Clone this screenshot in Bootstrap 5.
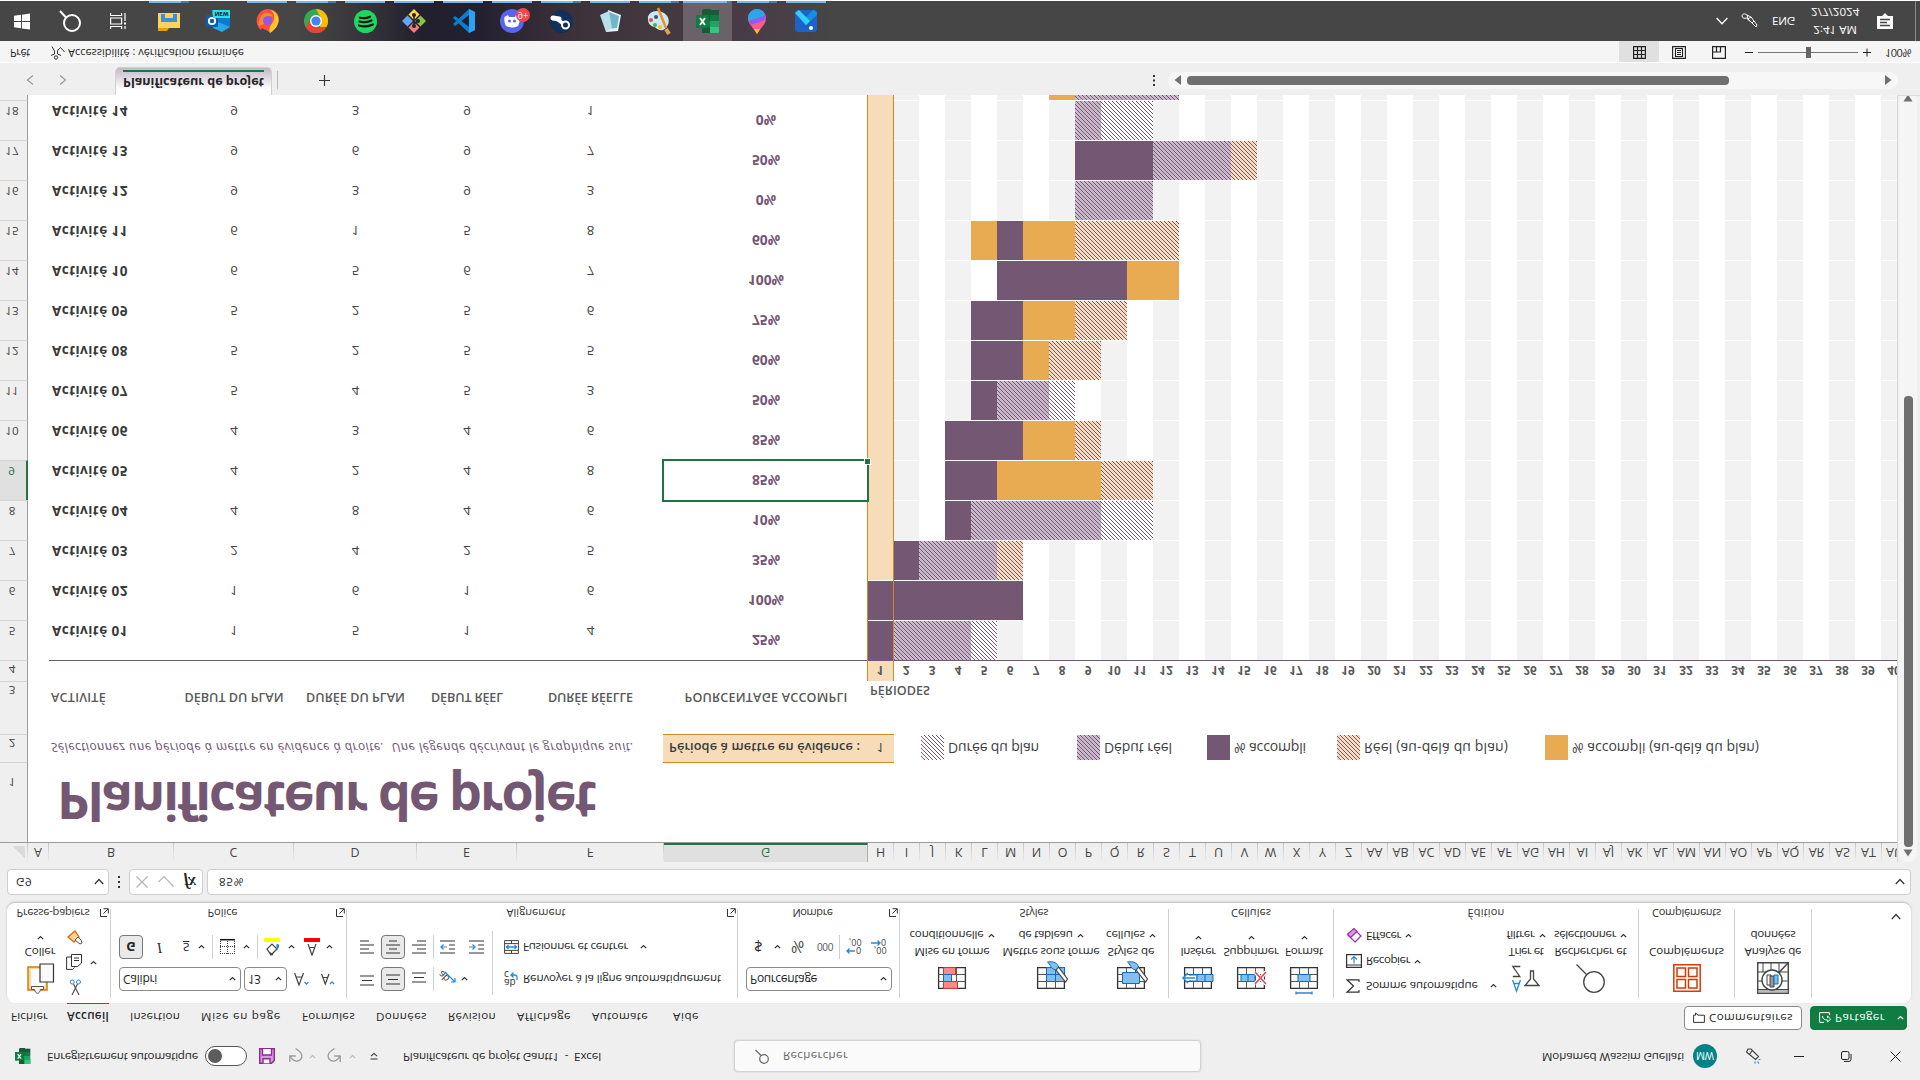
<!DOCTYPE html>
<html lang="fr">
<head>
<meta charset="utf-8">
<title>Planificateur de projet Gantt1 - Excel</title>
<link href="https://cdn.jsdelivr.net/npm/bootstrap@5.3.0/dist/css/bootstrap.min.css" rel="stylesheet">
<style>
:root{--plum:#735773;--lilac:#c9b9ca;--gold:#e8ab51;--cream:#f7dcb9;--xl:#107c41;
--hatch:url("data:image/svg+xml,%3Csvg xmlns='http://www.w3.org/2000/svg' width='4' height='4' shape-rendering='crispEdges'%3E%3Cpath fill='%23735773' d='M0 3h1v1H0zM1 2h1v1H1zM2 1h1v1H2zM3 0h1v1H3z'/%3E%3C/svg%3E")}
html,body{height:100%;overflow:hidden}
body{font:11.6px/16px "Open Sans","Noto Sans",sans-serif;color:#262626;background:#efefef}
.screen{width:1920px;height:1080px;overflow:hidden;transform:scaleY(-1);background:#efefef}
.screen svg{display:block;fill:none;flex:none;overflow:visible}
.rail{display:grid;align-items:center;white-space:nowrap;justify-items:start}
.cv{width:7px;height:5px;stroke:#333;stroke-width:1.2}
.cv.dim{stroke:#bbb}
.cv.inv{stroke:#fff}

/* title bar */
.titlebar{height:47px;padding-left:15px;grid-template-columns:32px 158px 54px 30px 20px 18px 22px 21px 33px 331px 808px 151px 52px 49px 47px 49px 20px}
.titlebar>span{margin-top:-1px}
.toggle{width:42px;height:20px;border:1.5px solid #555;border-radius:10px;background:#fff;padding:2px}
.toggle i{display:block;width:14px;height:14px;border-radius:50%;background:#5c5c5c}
.finder{width:467px;height:32px;border:1px solid #d2d2d2;border-radius:4px;background:#fafafa;box-shadow:0 0 2px #ccc;padding-left:20px;color:#666}
.avatar{width:24px;height:24px;border-radius:50%;background:#038387;color:#fff;font-size:10px}

/* tabs */
.tabs{height:30px;padding:0 13px 0 11px}
.tabnames{gap:21px;padding-top:2px}
.tabs .here{box-shadow:0 2px 0 var(--xl);height:24px;line-height:20px;padding-top:2px;margin:1px 0 0 -2px}
.tbtn{height:24px;border-radius:4px;border:1px solid #8a8a8a;background:#fff;white-space:nowrap;width:118px}
.tbtn.go{background:var(--xl);border-color:var(--xl);color:#fff;width:97px}

/* ribbon */
.ribbon{width:1904px;height:100px;margin-left:7px;background:#fff;border-radius:8px;box-shadow:0 1px 2px #bbb}
.vline{width:1px;background:#d0d0d0;margin:5px 0 6px}
.grp{height:100px}
.tools{height:80px}
.cap{height:20px;display:grid;grid-template-columns:1fr 12px;align-items:center;justify-items:center;font-size:11px;color:#333}
.cap.solo{grid-template-columns:1fr}
.g1{width:103px}.g2{width:235px}.g3{width:390px}.g4{width:161px}.g5{width:268px}.g6{width:164px}.g7{width:304px}.g8{width:95px}.g9{width:76px}
.g1 .cap{padding-left:1px}
.two{display:grid;grid-template-rows:24px 24px;row-gap:8px;padding-top:12px}
.pick{height:24px;border:1px solid #8a8a8a;border-radius:4px;padding:0 4px 0 3px;font-size:12px}
.w122{width:122px}.w43{width:43px}.w146{width:146px}
.on{width:24px;height:24px;border:1px solid #777;border-radius:4px;background:#e9e9e9}
.bold-g{font-weight:700;font-size:13px;line-height:22px;text-align:center}
.ital{font:italic 14px "Liberation Serif",serif}
.half{width:1px;height:24px;background:#d0d0d0}
.half.tall{box-shadow:0 4px 0 #d0d0d0,0 -4px 0 #d0d0d0}
.big{display:flex;flex-direction:column;align-items:center;white-space:nowrap;padding-top:7px;line-height:17px}
.big .art{height:35px;display:flex;align-items:center}
.big.w88{width:88px}.big.w110{width:110px}.big.w50{width:50px}.big.w53{width:53px}.big.w56{width:56px}.big.w73{width:73px}
.fa{padding-left:8px;grid-template-columns:125px 50px 27px 20px}
.fb{padding-left:8px;grid-template-columns:38px 26px 15px 14px 8px 23px 14px 7px 24px 16px 22px 10px}
.al{height:24px;padding-left:13px;grid-template-columns:21px 31px 21px 7px 21px 31px 12px 19px 117px 10px}
.na{padding-left:8px}
.nb{padding-left:16px;grid-template-columns:20px 17px 26px 22px 7px 25px 20px}
.nb .cur{font-size:15px}.nb .pct{font-size:16px;color:#444}.nb .mil{font-size:10px;color:#555}
.g1 .paste{width:64px;padding-left:2px}
.copy{gap:8px;margin-left:-4px}
.three{display:grid;grid-template-rows:25px 25px 25px;align-items:center;padding-top:5px;white-space:nowrap}
.g1 .three{margin-left:-1px;padding-top:3px}
.g7 .three{width:164px;padding-left:12px;grid-template-rows:24px 25px 26px}

/* formula bar */
.fbar{height:41px;padding:0 9px 7px 7px}
.fbox{height:26px;border:1px solid #cfcfcf;border-radius:4px;background:#fff}
.namebox{width:102px}
.fxbox{width:74px;padding-left:6px;gap:10px}
.fx{font:italic 700 16px/20px "Liberation Serif",serif;letter-spacing:-1px}
.entry{margin-left:4px;padding:0 5px 0 11px}

/* sheet */
.sheetwrap{height:766px}
.area{width:1898px;overflow:hidden;border-right:1px solid #d8d8d8;position:relative;background:#fff;height:767px}
.heads{height:20px;background:#efefef;border-bottom:1px solid #9b9b9b;color:#444;font-size:12.5px}
.heads div{flex:none;height:19px;text-align:center;line-height:20px;border-right:1px solid;border-image:linear-gradient(#efefef,#c4c4c4) 1}
.heads .sel{background:#e0e0e0;color:#217346;border-bottom:2px solid #217346;border-image:none;border-color:#217346;border-right-color:#b0b0b0}
.heads .corner{width:28px;background:linear-gradient(135deg,#efefef 50%,#dadada 50%) 13px 4px/12px 12px no-repeat}
.srow{display:flex;white-space:nowrap}
.rh{flex:none;width:28px;background:#efefef;border-right:1px solid #9b9b9b;border-bottom:1px solid #d4d4d4;display:flex;align-items:flex-end;justify-content:center;padding:0 3px 1px 0;font-size:11.6px;line-height:15px;color:#444}
.body-row .rh{padding-bottom:3px}
.rh.sel{background:#e0e0e0;color:#217346;border-right:2px solid #217346}
.ca{width:21px}.cb{width:125px}.cc{width:120px}.cd{width:123px}.ce{width:100px}.cf{width:147px}.cg{width:204px}.ch{width:26px}
.srow>.c{flex:none;text-align:center}
.body-row{height:40px}
.body-row .c{padding-top:18.500px;line-height:20px;font-size:13.2px;color:#444}
.body-row .cb{text-align:left;padding-left:3px;font-weight:700;font-size:13.5px;color:#3a3a3a}
.body-row .cg{width:204px;margin-right:-1px;padding-top:9.500px;font-weight:700;font-size:13.8px;color:var(--plum)}
.lane{display:flex;flex:none}
.lane i{flex:none;width:26px;height:39px}
.lane i:nth-child(even){background-color:#f2f2f2;background-position:2px 0}
.lane .hl{height:40px;background:var(--cream)}
.lane .P{background-color:var(--plum)!important}
.lane .O{background-color:var(--gold)!important}
.lane .V,.lane .W,.lane .T{background-image:var(--hatch)}
.lane .V{background-color:var(--lilac)!important}.lane .W{background-color:#fff!important}.lane .T{background-color:var(--cream)!important}
.r1{height:80px}.r1 .rh{padding-bottom:12px}
.bigname{font:700 52px/52px "Open Sans",sans-serif;color:var(--plum);padding:14px 0 0 29px;display:flex}
.r2{height:28px}.r3{height:53px}.r4{height:21px}
.hint{width:635px;padding:6px 0 0 23px;font-style:italic;font-size:12.8px;color:var(--plum)}
.pbox{width:231px;margin:-1px 0 0;height:29px;border:solid #ce8b24;border-width:1px 0;background:var(--cream);padding:0 10px 0 6px;font-weight:600;font-size:12.8px;color:#3a3a3a}
.key{font-size:14px;color:#3f3f3f;gap:4px;display:flex;align-items:center;height:27px}
.key i{width:23px;height:25px}
.key .kP{background:var(--plum)}.key .kO{background:var(--gold)}
.key .kV{background:var(--hatch) var(--lilac)}.key .kW{background:var(--hatch) #fff}.key .kT{background:var(--hatch) var(--cream)}
.keys{padding-left:27px;grid-template-columns:156px 130px 130px 208px 220px}
.r3 .c{padding-top:29px;line-height:16px;font-size:12.6px;font-weight:600;color:#595959}
.r3 .cb{padding-left:2px}
.r3 .cper{padding:36px 0 0 2px}
.r4 .rh{height:21px}
.r4 .gap{width:818px;border-bottom:1px solid var(--plum)}
.r4 .nums{border-bottom:1px solid var(--plum)}
.r4 .n{flex:none;width:26px;text-align:center;font-weight:700;font-size:11.8px;line-height:21px;height:20px;color:#595959}
.r4 .n:first-child{background:var(--cream)}
.colmark{position:absolute;left:867px;top:181px;width:27px;height:600px;border:solid #ce8b24;border-width:0 1px;pointer-events:none}
.cursor{position:absolute;left:662px;top:360px;width:207px;height:43px;border:2px solid #217346}
.cursor i{position:absolute;right:-4px;bottom:-3px;width:7px;height:7px;background:#217346;border:1px solid #fff}
.vbar{width:18px;margin-left:1px;background:#f5f5f5;border-radius:9px;padding:5px 0 3px;height:771px}
.vbar i{width:9px;height:451px;border-radius:4px;background:#707070;margin:2px 0 auto}

/* sheet tabs */
.sheettabs{height:33px;border-top:1px solid #dadada;padding:0 0 3px 26px;background:#efefef;grid-template-columns:33px 57px 161px 47px 829px 15px 734px}
.stab{width:157px;height:28px;align-self:start;background:linear-gradient(#fff 20%,#c5b8c8);border:1px solid #d0d0d0;border-top:0;border-radius:0 0 5px 5px;padding:5px 7px 0;font-weight:700;font-size:12.6px;line-height:16px;margin-left:-1px}
.stab div{border-bottom:2px solid var(--xl);height:20px}
.hbar{width:730px;height:17px;border-radius:9px;background:#f7f7f7;padding:0 6px}
.hbar i{width:542px;height:9px;border-radius:4px;background:#707070;margin:0 auto 0 6px}
.status{height:22px;border-top:1px solid #fff;background:#f5f5f5;padding:0 0 3px 10px;font-size:11px;grid-template-columns:40px 18px 1551px 40px 13px 40px 33px 13px 105px 22px 30px}
.status span{margin-top:-1px}
.status .vw{width:40px;height:21px;background:#e0e0e0;margin-bottom:-3px;padding-bottom:3px}

/* taskbar */
.taskbar{height:40px;background:linear-gradient(90deg,#464646 0 300px,#37353b 360px,#22202d 420px,#232030 480px,#3c3139 570px,#43393f 660px,#483b47 740px,#464646 830px)}
.tk{width:48px;height:40px;display:flex;align-items:center;justify-content:center;flex:none;padding-bottom:1px}
.app{width:49px;position:relative;padding-left:1px}
.run{background:linear-gradient(#76b9ed,#76b9ed) 5px 38px/40px 2px no-repeat}
.many{background:linear-gradient(90deg,#76b9ed 32px,#4b7ea5 32px) 5px 38px/40px 2px no-repeat}
.lit{background:linear-gradient(90deg,#76b9ed 44px,#4b7ea5 44px) 0 38px/48px 2px no-repeat,#6a6269}
.tray{color:#fff;margin-left:auto;width:204px;height:40px;grid-template-columns:26px 30px 39px 66px 38px 4px}
.clock{width:46px;text-align:right;line-height:17.5px;font-size:11.6px;margin-top:-1px}
.peek{width:1px;height:40px;background:#8a8a8a}
.tag{position:absolute;right:6px;top:19px;width:14px;height:14px;border-radius:50%;background:#f0474f;font-size:9px;line-height:14px;color:#fff;text-align:center}
.new{position:absolute;left:20px;top:23px;width:17px;height:8px;background:#2ce0ea;color:#013;font:700 6px/8px "Open Sans",sans-serif;text-align:center}
.lastline{height:1px}
</style>
<script src="https://cdn.jsdelivr.net/npm/bootstrap@5.3.0/dist/js/bootstrap.bundle.min.js"></script>
</head>
<body>
<svg width="0" height="0" class="position-absolute">
  <symbol id="cv" viewBox="0 0 7 5" overflow="visible"><path d="M.8 .8 3.5 3.5 6.2 .8"/></symbol>
  <symbol id="launch" viewBox="0 0 9 9" overflow="visible"><path d="M.5 8V.5H7M3.500 3.500 8 8M8.300 3.500v4.800H3.500" stroke="#333"/></symbol>
  <symbol id="xl" viewBox="0 0 24 24"><path fill="#21a366" d="M6 0h17v8H6z"/><path fill="#185c37" d="M6 0h9v24H7z"/><path fill="#107c41" d="M6 6h9v6H6z"/><path fill="#33c481" d="M14 0h9v6h-9z"/><path fill="#21a366" d="M14 6h9v6h-9z"/><path fill="#107c41" d="M14 12h9v6h-9z"/><path fill="#185c37" d="M6 18h17v5H6z"/><path fill="#107c41" d="M0 5h13v13H0z"/><path stroke="#fff" stroke-width="1.900" d="M4 8l5 7M9 8l-5 7"/></symbol>
  <symbol id="grid" viewBox="0 0 28 22" overflow="visible"><path fill="#fafafa" stroke="#333" stroke-width="1.300" d="M.6.6h26.800v20.800H.6z"/><path stroke="#555" d="M.6 7.500h26.800M.6 14.500h26.800M9.500.6v20.800M18.500.6v20.800"/></symbol>
  <symbol id="brush" viewBox="0 0 22 22" overflow="visible"><path fill="#fff" stroke="#444" stroke-width="1.200" d="M20.500 6 11 18l2.500 3 9-12z"/><path fill="#83beec" stroke="#0f6cbd" d="M10.500 18l3 3c-1 4-5 6-11 5 3-2 3-7 8-8z"/></symbol>
</svg>

<div class="screen d-flex flex-column">

  <header class="rail titlebar">
    <svg width="16" height="16"><use href="#xl"/></svg>
    <span data-w="151">Enregistrement automatique</span>
    <div class="toggle"><i></i></div>
    <svg width="16" height="16" viewBox="0 0 16 16" stroke="#8c2a96" stroke-width="1.400"><path fill="#d59add" d="M.7.7h11.800l2.800 2.800v11.800H.7z"/><path fill="#fff" d="M4 .7v4.600h7V.7M3.500 15V9h9v6"/></svg>
    <svg width="14" height="16" viewBox="0 0 14 16" stroke="#9a9a9a" stroke-width="1.300"><path d="M.8 2v6h6M1 8c3-6 8-6 10.500-3.500S13 11 10 13l-3.500 2.500"/></svg>
    <svg class="cv dim"><use href="#cv"/></svg>
    <svg width="14" height="16" viewBox="0 0 14 16" stroke="#9a9a9a" stroke-width="1.300"><path d="M13.200 2v6h-6M13 8C10 2 5 2 2.500 4.500S1 11 4 13l3.500 2.500"/></svg>
    <svg class="cv dim"><use href="#cv"/></svg>
    <svg width="8" height="8" viewBox="0 0 8 8" stroke="#333" stroke-width="1.100"><path d="M.5 1h7M1 3.800 4 6.600 7 3.800"/></svg>
    <span data-w="198">Planificateur de projet Gantt1&nbsp; -&nbsp; Excel</span>
    <div class="finder d-flex align-items-center">
      <svg class="me-3" width="14" height="15" viewBox="0 0 14 15" stroke="#666" stroke-width="1.200"><circle cx="9" cy="5" r="4.300"/><path d="M6 8.500.5 14"/></svg>
      <span style="margin-left:-2px" data-w="65">Rechercher</span>
    </div>
    <span data-w="142">Mohamed Wassim Guellati</span>
    <div class="avatar d-flex align-items-center justify-content-center">MW</div>
    <svg width="16" height="17" viewBox="0 0 16 17" stroke="#444" stroke-width="1.200"><path d="M1.500 13 10.500 5.500 13.500 8.500 6 16H3zM4.500 10.500 7 14"/><path stroke="#2b88d8" d="M10 1.500v2M14 1.500l-1.500 2M15.500 5.500h-2"/></svg>
    <svg width="11" height="11" viewBox="0 0 11 11" stroke="#222"><path d="M0 5.500h10"/></svg>
    <svg width="11" height="11" viewBox="0 0 11 11" stroke="#222"><rect x=".5" y="2.500" width="7.500" height="8" rx="1.500"/><path d="M3 .6h5q2 0 2 2V8"/></svg>
    <svg width="11" height="11" viewBox="0 0 11 11" stroke="#222"><path d="M.5.500l10 10M10.500.500l-10 10"/></svg>
  </header>

  <nav class="tabs d-flex align-items-center justify-content-between">
    <div class="tabnames d-flex align-items-center">
      <span data-w="37">Fichier</span><span class="here fw-semibold" data-w="42">Accueil</span><span data-w="50">Insertion</span><span data-w="80">Mise en page</span><span data-w="53">Formules</span><span data-w="51">Données</span><span data-w="48">Révision</span><span data-w="54">Affichage</span><span data-w="56">Automate</span><span class="ps-1" data-w="26">Aide</span>
    </div>
    <div class="d-flex gap-2">
      <div class="tbtn d-flex align-items-center gap-1 ps-2">
        <svg width="12" height="11" viewBox="0 0 12 11" stroke="#333"><path d="M.6.6h10.800v7.200H5L2.500 10V7.800H.6z"/></svg><span data-w="84">Commentaires</span>
      </div>
      <div class="tbtn go d-flex align-items-center gap-1 ps-2">
        <svg width="12" height="11" viewBox="0 0 12 11" stroke="#fff"><path d="M5 .600H.6v9.800h9.800V8M3.500 7c0-3 2-4 5-4V.800L11.600 4 8.500 7V5"/></svg><span data-w="50">Partager</span><svg class="cv inv ms-2"><use href="#cv"/></svg>
      </div>
    </div>
  </nav>

  <section class="ribbon d-flex">
    <div class="grp g1">
      <div class="tools d-flex">
        <div class="big paste">
          <div class="art"><svg width="27" height="31" viewBox="0 0 27 31"><path fill="#fbd88e" stroke="#dc7a0e" stroke-width="1.500" d="M1 4h19v23H1z"/><path fill="#fff" d="M4 8h14v17H4z"/><path fill="#f3f3f3" stroke="#555" d="M4.500 4.500h3c1-5 5-5 6 0h3v3h-12z"/><path fill="#fafafa" stroke="#333" stroke-width="1.200" d="M13 12h13.500v18H13z"/></svg></div>
          <span data-w="31">Coller</span><svg class="cv mt-1"><use href="#cv"/></svg>
        </div>
        <div class="three">
          <svg width="11" height="16" viewBox="0 0 11 16" stroke="#555"><path d="M2 0l5.500 11M9 0 3.500 11" stroke-width="1.200"/><circle cx="2.200" cy="13" r="2" stroke="#2b88d8"/><circle cx="8.500" cy="13" r="2" stroke="#2b88d8"/></svg>
          <div class="copy d-flex align-items-center"><svg width="16" height="16" viewBox="0 0 16 16" stroke="#333"><path d="M5 13H.600V.600h6l2 2"/><path d="M5.500 3.500h6L15.500 7v8.500h-10zM8 9.500h5M8 12h5"/></svg><svg class="cv"><use href="#cv"/></svg></div>
          <svg style="margin-left:-3px" width="17" height="15" viewBox="0 0 17 15"><path fill="#fbd88e" stroke="#dc6a0e" stroke-width="1.300" d="M1 8 7 3l5 5-4 6z"/><path fill="#fff" stroke="#555" d="M8 5l5-4 2 1-1 3-3 3z"/></svg>
        </div>
      </div>
      <div class="cap"><span data-w="73">Presse-papiers</span><svg width="9" height="9"><use href="#launch"/></svg></div>
    </div>
    <div class="vline"></div>

    <div class="grp g2">
      <div class="tools two">
        <div class="rail fa">
          <div class="pick w122 d-flex align-items-center justify-content-between"><span data-w="34">Calibri</span><svg class="cv"><use href="#cv"/></svg></div>
          <div class="pick w43 d-flex align-items-center justify-content-between"><span data-w="12">13</span><svg class="cv"><use href="#cv"/></svg></div>
          <svg width="15" height="14" viewBox="0 0 15 14" stroke="#444" stroke-width="1.200"><path d="M.6 13 5 1l4.500 12M2.200 9h5.800"/><path stroke="#2b88d8" d="M10.500 4l2-2.200 2 2.200"/></svg>
          <svg width="14" height="12" viewBox="0 0 14 12" stroke="#444" stroke-width="1.200"><path d="M.6 11 4.300 1 8 11M2 7.500h4.500"/><path stroke="#2b88d8" d="M9 1l2 2.200L13 1"/></svg>
        </div>
        <div class="rail fb">
          <div class="on bold-g">G</div>
          <span class="ital">I</span>
          <span class="text-decoration-underline">S</span>
          <svg class="cv"><use href="#cv"/></svg><span class="half"></span>
          <svg width="15" height="15" viewBox="0 0 15 15" stroke="#444"><path stroke-dasharray="1 1" d="M0 .500h15M0 7.500h15M.500 0v14M7.500 0v14M14.500 0v14"/><path stroke="#111" stroke-width="1.500" d="M0 14.300h15"/></svg>
          <svg class="cv"><use href="#cv"/></svg><span class="half"></span>
          <svg width="16" height="18" viewBox="0 0 16 18"><path stroke="#444" stroke-width="1.200" d="M7 1l6 6-5 5-5-5zM5 4l4-3"/><path fill="#2b88d8" d="M13 6c2 2 3 5 1 6s-2-3-1-6z"/><path fill="#ff0" d="M0 14h16v4H0z"/></svg>
          <svg class="cv"><use href="#cv"/></svg>
          <svg width="16" height="18" viewBox="0 0 16 18"><path stroke="#444" stroke-width="1.200" d="M4 12 8 1l4 11M5.500 8.500h5"/><path fill="red" d="M0 14h16v4H0z"/></svg>
          <svg class="cv"><use href="#cv"/></svg>
        </div>
      </div>
      <div class="cap"><span data-w="30">Police</span><svg width="9" height="9"><use href="#launch"/></svg></div>
    </div>
    <div class="vline"></div>

    <div class="grp g3">
      <div class="tools two">
        <div class="rail al">
          <svg width="14" height="14" viewBox="0 0 14 14" stroke="#333" stroke-width="1.200"><path d="M0 1h14M2 5.500h10M0 10h14"/></svg>
          <div class="on d-flex align-items-center justify-content-center"><svg width="14" height="12" viewBox="0 0 14 12" stroke="#333" stroke-width="1.200"><path d="M0 1h14M2 5.500h10M0 10h14"/></svg></div>
          <svg width="14" height="14" viewBox="0 0 14 14" stroke="#333" stroke-width="1.200"><path d="M0 4h14M2 8.500h10M0 13h14"/></svg>
          <span class="half"></span>
          <svg width="17" height="15" viewBox="0 0 17 15"><text x="-2" y="12" font-size="10" fill="#333" transform="rotate(-45 5 9)">ab</text><path stroke="#2b88d8" stroke-width="1.200" d="M5 14 15 4M11 4h4v4"/></svg>
          <svg class="cv"><use href="#cv"/></svg>
          <span class="half tall"></span>
          <svg width="15" height="16" viewBox="0 0 15 16"><text x="0" y="8" font-size="10" fill="#333">ab</text><text x="0" y="16" font-size="10" fill="#333">c</text><path stroke="#2b88d8" stroke-width="1.300" d="M13 7v3q0 2-3 2H7M9.500 9.500 7 12l2.500 2.500"/></svg>
          <span data-w="198">Renvoyer à la ligne automatiquement</span>
        </div>
        <div class="rail al">
          <svg width="14" height="14" viewBox="0 0 14 14" stroke="#333" stroke-width="1.200"><path d="M0 1h14M0 5h9M0 9h14M0 13h9"/></svg>
          <div class="on d-flex align-items-center justify-content-center"><svg width="14" height="14" viewBox="0 0 14 14" stroke="#333" stroke-width="1.200"><path d="M0 1h14M3 5h8M0 9h14M3 13h8"/></svg></div>
          <svg width="14" height="14" viewBox="0 0 14 14" stroke="#333" stroke-width="1.200"><path d="M0 1h14M5 5h9M0 9h14M5 13h9"/></svg>
          <span class="half"></span>
          <svg width="15" height="14" viewBox="0 0 15 14" stroke="#333" stroke-width="1.200"><path d="M0 1h15M9 5h6M9 9h6M0 13h15"/><path stroke="#2b88d8" d="M7 7H1M3.500 4.500 1 7l2.500 2.500"/></svg>
          <svg class="ms-2" width="15" height="14" viewBox="0 0 15 14" stroke="#333" stroke-width="1.200"><path d="M0 1h15M9 5h6M9 9h6M0 13h15"/><path stroke="#2b88d8" d="M0 7h6M3.500 4.500 6 7 3.500 9.500"/></svg>
          <span class="half tall"></span>
          <svg width="15" height="14" viewBox="0 0 15 14" stroke="#444"><path d="M.600.600h13.800v12.800H.600zM.600 3.600h13.800M.600 10.400h13.800M7.500.600v3M7.500 10.400v3"/><path stroke="#2b88d8" stroke-width="1.300" d="M2 7h11M4.500 5l-2 2 2 2M10.500 5l2 2-2 2"/></svg>
          <span data-w="105">Fusionner et centrer</span>
          <svg class="cv"><use href="#cv"/></svg>
        </div>
      </div>
      <div class="cap"><span data-w="59">Alignement</span><svg width="9" height="9"><use href="#launch"/></svg></div>
    </div>
    <div class="vline"></div>

    <div class="grp g4">
      <div class="tools two">
        <div class="na"><div class="pick w146 d-flex align-items-center justify-content-between"><span data-w="67">Pourcentage</span><svg class="cv"><use href="#cv"/></svg></div></div>
        <div class="rail nb">
          <span class="cur">$</span><svg class="cv"><use href="#cv"/></svg><span class="pct">%</span>
          <span class="mil" data-w="16">000</span><span class="half"></span>
          <svg width="16" height="16" viewBox="0 0 16 16"><text x="10" y="8" font-size="9" fill="#444">0</text><text x="3" y="16" font-size="9" fill="#444">,00</text><path stroke="#2b88d8" stroke-width="1.300" d="M9 4H1M3.500 1.500 1 4l2.500 2.500"/></svg>
          <svg width="16" height="16" viewBox="0 0 16 16"><text x="3" y="8" font-size="9" fill="#444">,00</text><text x="10" y="16" font-size="9" fill="#444">0</text><path stroke="#2b88d8" stroke-width="1.300" d="M0 12h9M6.500 9.500 9 12l-2.500 2.500"/></svg>
        </div>
      </div>
      <div class="cap"><span data-w="40">Nombre</span><svg width="9" height="9"><use href="#launch"/></svg></div>
    </div>
    <div class="vline"></div>

    <div class="grp g5">
      <div class="tools d-flex ps-2">
        <div class="big w88">
          <div class="art"><svg width="28" height="22"><use href="#grid"/><path fill="#ff8a8a" stroke="#d13438" d="M5.500.600h14v6.900h-14zM5.500 14.500h12v6.900h-12z"/><path fill="#83beec" stroke="#0f6cbd" d="M5.500 7.500h8v7h-8z"/></svg></div>
          <span data-w="75">Mise en forme</span><span class="d-flex align-items-center gap-1"><span data-w="74">conditionnelle</span><svg class="cv"><use href="#cv"/></svg></span>
        </div>
        <div class="big w110">
          <div class="art"><svg width="28" height="22"><use href="#grid"/><path fill="#83beec" stroke="#0f6cbd" d="M9.500 7.500h18v13.900h-18zM9.500 14.500h18M18.500 7.500v14"/><use href="#brush" x="8" y="1" width="22" height="22"/></svg></div>
          <span data-w="97">Mettre sous forme</span><span class="d-flex align-items-center gap-1"><span data-w="54">de tableau</span><svg class="cv"><use href="#cv"/></svg></span>
        </div>
        <div class="big w50">
          <div class="art"><svg width="28" height="22"><use href="#grid"/><path fill="#83beec" stroke="#0f6cbd" d="M5.500 5.500h17v11h-17z"/><use href="#brush" x="8" y="1" width="22" height="22"/></svg></div>
          <span data-w="47">Styles de</span><span class="d-flex align-items-center gap-1"><span data-w="39">cellules</span><svg class="cv"><use href="#cv"/></svg></span>
        </div>
      </div>
      <div class="cap solo"><span data-w="29">Styles</span></div>
    </div>
    <div class="vline"></div>

    <div class="grp g6">
      <div class="tools d-flex ps-1">
        <div class="big w50">
          <div class="art"><svg width="30" height="22"><use href="#grid"/><path fill="#83beec" stroke="#0f6cbd" d="M7 7.500h23v7H7zM14 7.500v7M22 7.500v7"/><path stroke="#fff" stroke-width="4" d="M13 11H0"/><path stroke="#2b88d8" stroke-width="1.500" d="M12 11H0M5 6l-5 5 5 5"/></svg></div>
          <span data-w="35">Insérer</span><svg class="cv mt-1"><use href="#cv"/></svg>
        </div>
        <div class="big w56">
          <div class="art"><svg width="28" height="22"><use href="#grid"/><path fill="#83beec" stroke="#0f6cbd" d="M4 7.500h14v7H4zM11 7.500v7"/><path stroke="#fff" stroke-width="4" d="M18 5l11 12M29 5 18 17"/><path stroke="#e8474f" stroke-width="1.600" d="M18 5l11 12M29 5 18 17"/></svg></div>
          <span data-w="55">Supprimer</span><svg class="cv mt-1"><use href="#cv"/></svg>
        </div>
        <div class="big w50">
          <div class="art"><svg width="28" height="22"><use href="#grid"/><path fill="#83beec" stroke="#0f6cbd" d="M8 7.500h12v7H8z"/><path stroke="#2b88d8" stroke-width="1.300" d="M6-4h16M6-5.500v3M22-5.500v3"/></svg></div>
          <span data-w="38">Format</span><svg class="cv mt-1"><use href="#cv"/></svg>
        </div>
      </div>
      <div class="cap solo"><span data-w="40">Cellules</span></div>
    </div>
    <div class="vline"></div>

    <div class="grp g7">
      <div class="tools d-flex">
        <div class="three">
          <div class="d-flex align-items-center gap-1"><svg width="16" height="14" viewBox="0 0 16 14" stroke="#333" stroke-width="1.200"><path d="M13 3V.800H1L7.500 7 1 13.200h12V11"/></svg><span data-w="112">Somme automatique</span><svg class="cv ms-2"><use href="#cv"/></svg></div>
          <div class="d-flex align-items-center gap-1"><svg width="16" height="14" viewBox="0 0 16 14" stroke="#333" stroke-width="1.200"><path d="M.600.600h14.800v12.800H.600zM.600 3h14.800"/><path stroke="#2b88d8" d="M8 4.500V11M5 8.500l3 3 3-3"/></svg><span data-w="44">Recopier</span><svg class="cv"><use href="#cv"/></svg></div>
          <div class="d-flex align-items-center gap-1"><svg width="16" height="15" viewBox="0 0 16 15" stroke="#9b2fae" stroke-width="1.200"><path fill="#fff" d="M9 1l6 6-7 7-6-6z"/><path fill="#d59add" d="M4.500 5.500l6.500 6-3 3-6.500-5.500z"/></svg><span data-w="35">Effacer</span><svg class="cv"><use href="#cv"/></svg></div>
        </div>
        <div class="big w56">
          <div class="art"><svg width="28" height="27" viewBox="0 0 28 27" stroke-width="1.300"><path stroke="#2b88d8" d="M.600 12 4.500 1l4 11M2 8.500h5.500"/><path stroke="#444" d="M.800 15.500h7L.800 25.500h7.500M13 6.500h14l-5.500 6.500v8h-3v-8z"/></svg></div>
          <span data-w="35">Trier et</span><span class="d-flex align-items-center gap-1"><span data-w="28">filtrer</span><svg class="cv"><use href="#cv"/></svg></span>
        </div>
        <div class="big w73">
          <div class="art"><svg width="29" height="29" viewBox="0 0 29 29" stroke="#444" stroke-width="1.300"><circle cx="18" cy="11" r="10.300"/><path d="M10.500 18.500.500 28.500"/></svg></div>
          <span data-w="72">Rechercher et</span><span class="d-flex align-items-center gap-1"><span data-w="62">sélectionner</span><svg class="cv"><use href="#cv"/></svg></span>
        </div>
      </div>
      <div class="cap solo"><span data-w="37">Édition</span></div>
    </div>
    <div class="vline"></div>

    <div class="grp g8">
      <div class="tools"><div class="big">
        <div class="art"><svg width="28" height="28" viewBox="0 0 28 28" stroke="#d83b01" stroke-width="1.500"><path d="M.800.800h26.400v26.400H.800zM4 4h8.500v8.500H4zM15.500 4H24v8.500h-8.500zM4 15.500h8.500V24H4zM15.500 15.500H24V24h-8.500z"/></svg></div>
        <span data-w="75">Compléments</span></div></div>
      <div class="cap solo"><span data-w="69">Compléments</span></div>
    </div>
    <div class="vline"></div>
    <div class="grp g9">
      <div class="tools"><div class="big">
        <div class="art"><svg width="32" height="32" viewBox="0 0 32 32" stroke="#444"><path fill="#fafafa" stroke-width="1.400" d="M.700.700h30.600v30.600H.700z"/><path fill="#bbb" d="M.700.700h30.600v3.800H.700z"/><path d="M.700 13h30M.700 22h30M6 22v9M14 22v9M22 22v9"/><circle cx="15" cy="14" r="10" fill="#fff" stroke-width="1.400"/><path fill="#fff" d="M10 9h4v10h-4z"/><path fill="#999" d="M13 7h4v11h-4z"/><path fill="#83beec" stroke="#0f6cbd" d="M17 10h4v9h-4z"/><path stroke-width="1.500" d="M22 21.500 31 31"/></svg></div>
        <span data-w="57">Analyse de</span><span data-w="45">données</span></div></div>
    </div>
    <div class="vline"></div>
    <svg class="align-self-end ms-auto" style="margin:0 10px 10px" width="10" height="7" viewBox="0 0 10 7" stroke="#333" stroke-width="1.200"><path d="M.800 1 5 5.500 9.200 1"/></svg>
  </section>

  <section class="fbar d-flex align-items-end">
    <div class="fbox namebox d-flex align-items-center justify-content-between ps-2 pe-1"><span data-w="16">G9</span><svg width="10" height="7" viewBox="0 0 10 7" stroke="#333" stroke-width="1.200"><path d="M.800 1 5 5.500 9.200 1"/></svg></div>
    <svg width="20" height="26" viewBox="0 0 20 26"><path fill="#333" d="M9 7h2v2H9zM9 12h2v2H9zM9 17h2v2H9z"/></svg>
    <div class="fbox fxbox d-flex align-items-center">
      <svg width="12" height="12" viewBox="0 0 12 12" stroke="#b5b5b5" stroke-width="1.200"><path d="M.500.500l11 11M11.500.500l-11 11"/></svg>
      <svg width="16" height="11" viewBox="0 0 16 11" stroke="#b5b5b5" stroke-width="1.200"><path d="M.500 5 6 10.500 15.500.500"/></svg>
      <span class="fx">fx</span>
    </div>
    <div class="fbox entry d-flex align-items-center justify-content-between flex-fill"><span data-w="25">85%</span><svg width="10" height="7" viewBox="0 0 10 7" stroke="#333" stroke-width="1.200"><path d="M.800 1 5 5.500 9.200 1"/></svg></div>
  </section>

  <main class="sheetwrap d-flex">
    <div class="area">
      <div class="heads d-flex" id="heads"></div>
      <div class="srow r1"><div class="rh">1</div><div class="bigname"><span data-w="538">Planificateur de projet</span></div></div>
      <div class="srow r2"><div class="rh">2</div>
        <div class="hint"><span data-w="583">Sélectionnez une période à mettre en évidence à droite.&nbsp; Une légende décrivant le graphique suit.</span></div>
        <div class="pbox d-flex align-items-center justify-content-between"><span data-w="191">Période à mettre en évidence :</span><span class="fw-normal">1</span></div>
        <div class="rail keys">
          <div class="key"><i class="kW"></i><span data-w="91">Durée du plan</span></div>
          <div class="key"><i class="kV"></i><span data-w="68">Début réel</span></div>
          <div class="key"><i class="kP"></i><span data-w="72">% accompli</span></div>
          <div class="key"><i class="kT"></i><span data-w="144">Réel (au-delà du plan)</span></div>
          <div class="key"><i class="kO"></i><span data-w="187">% accompli (au-delà du plan)</span></div>
        </div>
      </div>
      <div class="srow r3"><div class="rh">3</div><div class="c ca"></div><div class="c cb text-start"><span data-w="55">ACTIVITÉ</span></div><div class="c cc"><span data-w="99">DÉBUT DU PLAN</span></div><div class="c cd"><span data-w="99">DURÉE DU PLAN</span></div><div class="c ce"><span data-w="72">DÉBUT RÉEL</span></div><div class="c cf"><span data-w="85">DURÉE RÉELLE</span></div><div class="c cg"><span data-w="163">POURCENTAGE ACCOMPLI</span></div><div class="c cper"><span data-w="60">PÉRIODES</span></div></div>
      <div class="srow r4"><div class="rh">4</div><div class="c ca"></div><div class="c gap"></div><div class="nums d-flex" id="periods"></div></div>
      <div id="rows"></div>
      <div class="colmark"></div>
      <div class="cursor"><i></i></div>
    </div>
    <div class="vbar d-flex flex-column align-items-center">
      <svg width="10" height="8" viewBox="0 0 10 8"><path fill="#707070" d="M5 .500 9.500 7.500H.500z"/></svg><i></i>
      <svg width="10" height="8" viewBox="0 0 10 8"><path fill="#707070" d="M.500.500h9L5 7.500z"/></svg>
    </div>
  </main>

  <section class="rail sheettabs">
    <svg width="8" height="10" viewBox="0 0 8 10" stroke="#999" stroke-width="1.200"><path d="M7 .500 1.500 5 7 9.500"/></svg>
    <svg width="8" height="10" viewBox="0 0 8 10" stroke="#999" stroke-width="1.200"><path d="M1 .500 6.500 5 1 9.500"/></svg>
    <div class="stab"><div><span data-w="141">Planificateur de projet</span></div></div>
    <svg width="2" height="18"><path stroke="#bbb" d="M.500 0v18"/></svg>
    <svg width="11" height="11" viewBox="0 0 11 11" stroke="#333" stroke-width="1.100" style="margin-left:-5px"><path d="M5.500 0v11M0 5.500h11"/></svg>
    <svg width="2" height="11"><path fill="#333" d="M0 0h2v2H0zM0 4.500h2v2H0zM0 9h2v2H0z"/></svg>
    <div class="hbar d-flex align-items-center"><svg width="7" height="10" viewBox="0 0 7 10"><path fill="#707070" d="M7 0v10L.500 5z"/></svg><i></i><svg width="7" height="10" viewBox="0 0 7 10"><path fill="#707070" d="M0 0v10l6.500-5z"/></svg></div>
  </section>

  <footer class="rail status">
    <span data-w="20">Prêt</span>
    <svg width="15" height="14" viewBox="0 0 15 14" stroke="#333"><circle cx="6" cy="2.500" r="1.700"/><path d="M1 4.500l3.500 1.500v3L2 13.500M11 4.500 7.500 6v3l1 2"/><path d="M8.500 10.500l2 2 4-4.500"/></svg>
    <span data-w="176">Accessibilité : vérification terminée</span>
    <div class="vw d-flex align-items-center justify-content-center"><svg width="13" height="13" viewBox="0 0 13 13" stroke="#222" stroke-width="1.200"><path d="M.600.600h11.800v11.800H.600zM.600 4.500h12M.600 8.500h12M4.500.600v12M8.500.600v12"/></svg></div>
    <span></span>
    <svg width="14" height="13" viewBox="0 0 14 13" stroke="#222" stroke-width="1.100"><path d="M.600.600h12.800v11.800H.600zM3.500 2.500h7v8h-7zM5 4.500h4M5 6.500h4M5 8.500h4"/></svg>
    <svg width="14" height="13" viewBox="0 0 14 13" stroke="#222" stroke-width="1.200"><path d="M.600.600h12.800v11.800H.600zM.600 7h7.900v5M4.500 7v5"/></svg>
    <svg width="8" height="8" viewBox="0 0 8 8" stroke="#222"><path d="M0 4.500h8"/></svg>
    <svg width="100" height="11" viewBox="0 0 100 11"><path stroke="#777" d="M0 5.500h100"/><path fill="#666" d="M48 0h5v11h-5z"/></svg>
    <svg width="8" height="8" viewBox="0 0 8 8" stroke="#222"><path d="M0 4.500h8M4 .500v8"/></svg>
    <span data-w="26">100%</span>
  </footer>

  <footer class="taskbar d-flex">
    <div class="tk pe-1"><svg width="16" height="17" viewBox="0 0 17 17"><path fill="#fff" d="M0 2.300 7.500 1.200V8H0zM8.500 1.100 17 0v8H8.500zM0 9h7.500v6.800L0 14.700zM8.500 9H17v8l-8.500-1.200z"/></svg></div>
    <div class="tk pe-1"><svg width="22" height="22" viewBox="0 0 22 22" stroke="#fff" stroke-width="2"><circle cx="13" cy="9" r="8"/><path d="M7 14.500 1 21"/></svg></div>
    <div class="tk pe-1"><svg width="17" height="16" viewBox="0 0 17 16" stroke="#fff" stroke-width="1.200"><path d="M.600 0v2.500h11V0M.600 5h11v6H.600zM.600 16v-2.500h11V16M15 0v3M15 8v8"/><path stroke-width="2" d="M15 4.500v2"/></svg></div>
    <div class="tk app many"><svg width="22" height="21" viewBox="0 0 22 21"><path fill="#e79c12" d="M0 1h9l2 3h11v4H0z"/><path fill="#fcd35b" d="M0 4h22v15H0z"/><path fill="#3b8fdd" d="M3 10h16v8h-4v-4H7v4H3z"/></svg></div>
    <div class="tk app"><svg width="24" height="22" viewBox="0 0 24 22"><path fill="#28a8ea" d="M7 4 16 0l8 5v14l-10 3H6z"/><path fill="#0f78d4" d="M12 10l12-5v12l-9 5-8-4z"/><path fill="#0a5cb0" d="M0 5h12v12H0z"/><circle cx="6" cy="11" r="3.200" stroke="#fff" stroke-width="1.800"/></svg><span class="new">NEW</span></div>
    <div class="tk app run"><svg width="23" height="24" viewBox="0 0 23 24"><path fill="#ff4f3e" d="M1 9C2 6 3 4 5 3l1 2c3-2 6-2 8-5 6 4 9 9 9 14 0 6-5 10-11 10S-1 18 1 9z"/><path fill="#ffc72e" d="M14 0c6 4 9 9 8.500 14-.500 5-4 8-8 9 4-3 5-8 2-13-3-4-4-6-2.500-10z"/><path fill="#ff8a2b" d="M3 7l5 2c4 0 4 3 2 4 0 4 4 5 7 3-1 5-9 6-12 1-2-3-3-7-2-10z"/><circle cx="11.500" cy="12.500" r="4.500" fill="#9059e8"/></svg></div>
    <div class="tk app many"><svg width="24" height="24" viewBox="0 0 24 24"><circle cx="12" cy="12" r="12" fill="#34a853"/><path fill="#ea4335" d="M1.600 6A12 12 0 0 1 22.400 6H12l-5.500 8z"/><path fill="#fbbc04" d="M22.400 6A12 12 0 0 1 12 24l5-9-1-9z"/><circle cx="12" cy="12" r="6" fill="#fff"/><circle cx="12" cy="12" r="4.600" fill="#4285f4"/></svg></div>
    <div class="tk app run"><svg width="23" height="23" viewBox="0 0 23 23"><circle cx="11.500" cy="11.500" r="11.500" fill="#1ed760"/><path stroke="#111" stroke-width="2.200" stroke-linecap="round" d="M5 7.500c5-1.500 10-1 14 1M5.500 11.500c4-1 8.500-.700 12 1M6 15.300c3.500-.800 7-.500 10 1"/></svg></div>
    <div class="tk app run"><svg width="24" height="24" viewBox="0 0 24 24"><path fill="#f47c7c" d="M12 0l5.500 5.500L12 11 6.500 5.500z"/><path fill="#8bc34a" d="M18.500 6.500 24 12l-5.500 5.500L13 12z"/><path fill="#ffd54f" d="M12 13l5.500 5.500L12 24l-5.500-5.500z"/><path fill="#64a6ff" d="M5.500 6.500 11 12l-5.500 5.500L0 12z"/><path stroke="#222" stroke-width="1.500" d="M12 6v12M12 9l4 3"/><circle cx="12" cy="18" r="2" fill="#222"/><circle cx="16" cy="12" r="2" fill="#222"/><circle cx="12" cy="7" r="2" fill="#222"/></svg></div>
    <div class="tk app run"><svg width="24" height="24" viewBox="0 0 24 24"><path fill="#0a7fd0" d="M18 0l6 3v18l-6 3L2 9l2-2 14 11V6L4 17l-2-2z"/><path fill="#2aa3f4" d="M18 0l6 3v18l-6 3z"/></svg></div>
    <div class="tk app run"><svg width="24" height="24" viewBox="0 0 24 24"><circle cx="12" cy="12" r="12" fill="#5865f2"/><path fill="#fff" d="M6 7c4-2 8-2 12 0 1.500 3 2 6 1.500 9L16 18l-1-2H9l-1 2-3.500-2C4 13 4.500 10 6 7z"/><circle cx="9.500" cy="12" r="1.500" fill="#5865f2"/><circle cx="14.500" cy="12" r="1.500" fill="#5865f2"/></svg><span class="tag">9+</span></div>
    <div class="tk app many"><svg width="23" height="23" viewBox="0 0 23 23"><circle cx="11.500" cy="11.500" r="11.500" fill="#12305c"/><path stroke="#fff" stroke-width="5" stroke-linecap="round" d="M3 15l6-1"/><path stroke="#fff" stroke-width="3.500" d="M7 14l8-6"/><circle cx="15.500" cy="8" r="3.500" fill="#12305c" stroke="#fff" stroke-width="2"/></svg></div>
    <div class="tk app run"><svg width="21" height="22" viewBox="0 0 21 22"><path fill="#e6f4f8" d="M6 0l12 1 3 16-13 5z"/><path fill="#6db6c8" d="M7 3l10 1 2 12-10 4z"/><path fill="#b9dfe9" d="M6 0 0 17l9 4 3-17z"/></svg></div>
    <div class="tk app many"><svg width="24" height="26" viewBox="0 0 24 26"><path fill="#cfe6f5" d="M1 15C0 21 8 25 15 22s9-10 4-16c-4-4-8-2-10 0S1 7 1 15z"/><circle cx="4" cy="14" r="2" fill="#e5484d"/><circle cx="8" cy="9" r="2" fill="#4caf50"/><circle cx="13" cy="7" r="2" fill="#f5c518"/><circle cx="9" cy="17" r="2" fill="#34566f"/><path stroke="#e89232" stroke-width="2.500" d="M11 26l8-20"/><path stroke="#d9a15a" stroke-width="4" d="M19 5l3-5"/></svg></div>
    <div class="tk app lit"><svg width="24" height="24"><use href="#xl"/></svg></div>
    <div class="tk app many"><svg width="18" height="25" viewBox="0 0 18 25"><path fill="#ff5a8a" d="M9 0 4 7C0 12 0 15 0 16a9 9 0 0 0 18 0c0-4-2-7-4-9z"/><path fill="#28a8ea" d="M0 16a9 9 0 0 0 17 4c-4-5-9-4-16-7z"/><path fill="#8e5cf0" d="M1 13c7 3 12 2 16 7l1-5C12 11 8 12 3 9z"/><path fill="#ffc400" d="M6 5h6L9 0z"/></svg></div>
    <div class="tk app run"><svg width="22" height="22" viewBox="0 0 22 22"><rect width="22" height="22" rx="3" fill="#1d62c9"/><path fill="#1490df" d="M22 17 11 7 7 11l11 11h1l3-3z"/><path fill="#38d0fa" d="M0 19l4 3 11-11-4-4z"/><circle cx="16" cy="4" r="2" fill="#fff"/></svg></div>
    <div class="rail tray">
      <svg width="12" height="8" viewBox="0 0 12 8" stroke="#fff" stroke-width="1.300"><path d="M.600 7 6 1.200 11.400 7"/></svg>
      <svg width="16" height="15" viewBox="0 0 16 15" stroke="#fff"><path d="M14 1 6 9l-1 4 4-2 6-8zM6 9l3 2M10 5l2 2M5 13c-2 2-5 1-5-1s3-3 4-2 2-3 4-3"/></svg>
      <span data-w="23">ENG</span>
      <div class="clock"><div>2:41 AM</div><div>2/7/2024</div></div>
      <svg width="16" height="16" viewBox="0 0 16 16"><path fill="#fff" d="M0 0h16v13h-5l-3 3-3-3H0z"/><path stroke="#464646" stroke-width="1.300" d="M3 3.500h10M3 6.500h7M3 9.500h10"/></svg>
      <span class="peek"></span>
    </div>
  </footer>
  <div class="lastline bg-white"></div>
</div>

<script>
// Activity rows: plan start, plan length, real start, real length, progress, bar cells, first bar cell
// P done, V started, W planned, O done past plan, T real past plan
const acts=[
 [1,5,1,4,'25%','PVVVW',0],[1,6,1,6,'100%','PPPPPP',0],[2,4,2,5,'35%','PVVVT',1],[4,8,4,6,'10%','PVVVVVWW',3],
 [4,2,4,8,'85%','PPOOOOTT',3],[4,3,4,6,'85%','PPPOOT',3],[5,4,5,3,'50%','PVVW',4],[5,2,5,5,'60%','PPOTT',4],
 [5,2,5,6,'75%','PPOOTT',4],[6,5,6,7,'100%','PPPPPOO',5],[6,1,5,8,'60%','OPOOTTTT',4],[9,3,9,3,'0%','VVV',8],
 [9,6,9,7,'50%','PPPVVVT',8],[9,3,9,1,'0%','VWW',8],['','','','','','OVVVV',7]];
const span=40;
const colName=n=>n<26?String.fromCharCode(65+n):'A'+String.fromCharCode(39+n);
let h='<div class="corner"></div>';
'abcdefg'.split('').forEach((k,i)=>h+=`<div class="c${k} ${k==='g'?'sel':''}">${colName(i)}</div>`);
for(let i=7;i<47;i++)h+=`<div class="ch">${colName(i)}</div>`;
heads.innerHTML=h;
periods.innerHTML=Array.from({length:span},(_,i)=>`<div class="n">${i+1}</div>`).join('');
rows.innerHTML=acts.map((a,r)=>{
  let lane='';
  for(let i=0;i<span;i++){const k=a[5][i-a[6]]||'';lane+=`<i class="${k||(i?'':'hl')}"></i>`;}
  const name=a[0]===''?'':`<span data-w="76">Activité ${String(r+1).padStart(2,'0')}</span>`;
  return `<div class="srow body-row"><div class="rh ${r===4?'sel':''}">${a[0]===''?'':r+5}</div><div class="c ca"></div><div class="c cb">${name}</div><div class="c cc">${a[0]}</div><div class="c cd">${a[1]}</div><div class="c ce">${a[2]}</div><div class="c cf">${a[3]}</div><div class="c cg">${a[4]}</div><div class="lane">${lane}</div></div>`;
}).join('');
// Tracking is adjusted so that each label keeps its nominal width
document.querySelectorAll('[data-w]').forEach(e=>{
  const r=document.createRange();r.selectNodeContents(e);
  const d=(+e.dataset.w-r.getBoundingClientRect().width)/e.textContent.length;
  e.style.letterSpacing=d.toFixed(3)+'px';
});
</script>
</body>
</html>
